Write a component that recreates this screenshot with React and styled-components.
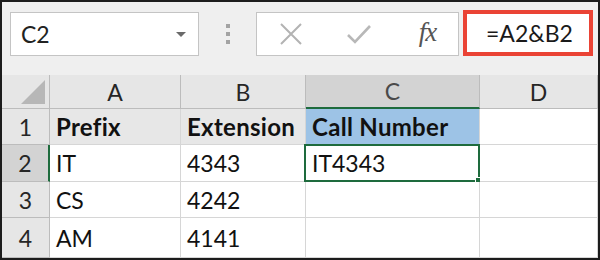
import React from "react";
import styled, { createGlobalStyle } from "styled-components";

const Global = createGlobalStyle`
  html, body { margin: 0; padding: 0; background: #fff; }
  body { font-family: Lato, "Open Sans", sans-serif; }
`;

const Frame = styled.div`
  width: 600px;
  height: 260px;
  box-sizing: border-box;
  border: 2px solid #1c1c1c;
  background: #efefef;
  display: flex;
  flex-direction: column;
  overflow: hidden;
`;

const Toolbar = styled.div`
  height: 73px;
  flex: none;
  display: flex;
  align-items: flex-start;
  padding: 8px 4px 0 8px;
  box-sizing: border-box;
`;

const NameBox = styled.div`
  width: 189px;
  height: 44px;
  margin-top: 2px;
  box-sizing: border-box;
  background: #fff;
  border: 1px solid #c4c4c4;
  display: flex;
  align-items: center;
  justify-content: space-between;
  padding: 0 12px 0 10px;
  font-size: 23px;
  color: #222;
`;

const Caret = styled.span`
  width: 0;
  height: 0;
  border-left: 5px solid transparent;
  border-right: 5px solid transparent;
  border-top: 5px solid #6a6a6a;
`;

const Grip = styled.div`
  width: 57px;
  height: 48px;
  display: flex;
  flex-direction: column;
  align-items: center;
  justify-content: center;
  gap: 4px;
  span {
    width: 4px;
    height: 4px;
    background: #a3a3a3;
  }
`;

const ButtonBox = styled.div`
  width: 203px;
  height: 44px;
  margin-top: 2px;
  box-sizing: border-box;
  background: #fff;
  border: 1px solid #c4c4c4;
  display: grid;
  grid-template-columns: 68px 68px 1fr;
  align-items: center;
  justify-items: center;
`;

const Fx = styled.span`
  font-family: "Liberation Serif", serif;
  font-style: italic;
  font-size: 27px;
  color: #555;
  letter-spacing: -1px;
  padding-left: 4px;
  margin-top: -4px;
`;

const FormulaBox = styled.div`
  margin-left: 4px;
  width: 130px;
  height: 46px;
  box-sizing: border-box;
  background: #fff;
  border: 4px solid #ea4335;
  display: flex;
  align-items: center;
  padding-left: 19px;
  font-size: 23px;
  color: #1a1a1a;
`;

const Sheet = styled.div`
  flex: 1;
  display: grid;
  grid-template-columns: 48px 131px 125px 174px 1fr;
  grid-template-rows: 34px 36px 37px 36px 1fr;
  background: #fff;
`;

const ColHead = styled.div`
  background: ${(p) => (p.$active ? "#d3d3d3" : "#e6e6e6")};
  border-right: 1px solid #bcbcbc;
  border-bottom: ${(p) => (p.$active ? "2px solid #1e6b3d" : "1px solid #bcbcbc")};
  display: flex;
  align-items: center;
  justify-content: center;
  font-size: 23px;
  color: ${(p) => (p.$active ? "#4a4a4a" : "#262626")};
  box-sizing: border-box;
`;

const Corner = styled.div`
  background: #e6e6e6;
  border-right: 1px solid #bcbcbc;
  border-bottom: 1px solid #bcbcbc;
  display: flex;
  align-items: flex-end;
  justify-content: flex-end;
  padding: 0 4px 4px 0;
  box-sizing: border-box;
  span {
    width: 0;
    height: 0;
    border-left: 24px solid transparent;
    border-bottom: 24px solid #b7b7b7;
  }
`;

const RowHead = styled.div`
  background: ${(p) => (p.$active ? "#d3d3d3" : "#e6e6e6")};
  border-right: ${(p) => (p.$active ? "2px solid #1e6b3d" : "1px solid #bcbcbc")};
  border-bottom: 1px solid #bcbcbc;
  display: flex;
  align-items: center;
  justify-content: center;
  font-size: 23px;
  color: #262626;
  box-sizing: border-box;
`;

const Cell = styled.div`
  position: relative;
  background: ${(p) => p.$fill || "#fff"};
  border-right: 1px solid #d6d6d6;
  border-bottom: 1px solid #d6d6d6;
  display: flex;
  align-items: center;
  padding-left: 6px;
  font-size: ${(p) => (p.$bold ? "24px" : "23px")};
  font-weight: ${(p) => (p.$bold ? 700 : 400)};
  letter-spacing: ${(p) => (p.$bold ? "0.3px" : "0")};
  color: #111;
  box-sizing: border-box;
`;

const Selection = styled.div`
  position: absolute;
  left: -2px;
  top: -1px;
  right: -1px;
  bottom: -1px;
  border: 2px solid #1e6b3d;
  pointer-events: none;
`;

const Handle = styled.div`
  position: absolute;
  right: -6px;
  bottom: -6px;
  width: 7px;
  height: 7px;
  background: #1e6b3d;
  border: 1px solid #fff;
`;

const Cross = () => (
  <svg width="24" height="24" viewBox="0 0 24 24">
    <path d="M2 2 L22 22 M22 2 L2 22" stroke="#b3b3b3" strokeWidth="2" fill="none" />
  </svg>
);

const Check = () => (
  <svg width="26" height="22" viewBox="0 0 26 22">
    <path d="M2 12 L9 19 L24 3" stroke="#b8b8b8" strokeWidth="2.6" fill="none" />
  </svg>
);

const rows = [
  { n: 1, cells: [{ t: "Prefix", b: true, f: "#e7e7e7" }, { t: "Extension", b: true, f: "#e7e7e7" }, { t: "Call Number", b: true, f: "#9dc3e6" }, { t: "" }] },
  { n: 2, active: true, cells: [{ t: "IT" }, { t: "4343" }, { t: "IT4343", sel: true }, { t: "" }] },
  { n: 3, cells: [{ t: "CS" }, { t: "4242" }, { t: "" }, { t: "" }] },
  { n: 4, cells: [{ t: "AM" }, { t: "4141" }, { t: "" }, { t: "" }] },
];

export default function App() {
  return (
    <>
      <Global />
      <Frame>
        <Toolbar>
          <NameBox>
            C2
            <Caret />
          </NameBox>
          <Grip>
            <span />
            <span />
            <span />
          </Grip>
          <ButtonBox>
            <Cross />
            <Check />
            <Fx>fx</Fx>
          </ButtonBox>
          <FormulaBox>=A2&amp;B2</FormulaBox>
        </Toolbar>
        <Sheet>
          <Corner>
            <span />
          </Corner>
          {["A", "B", "C", "D"].map((c) => (
            <ColHead key={c} $active={c === "C"}>
              {c}
            </ColHead>
          ))}
          {rows.map((r) => (
            <React.Fragment key={r.n}>
              <RowHead $active={r.active}>{r.n}</RowHead>
              {r.cells.map((c, i) => (
                <Cell key={i} $bold={c.b} $fill={c.f}>
                  {c.t}
                  {c.sel && (
                    <Selection>
                      <Handle />
                    </Selection>
                  )}
                </Cell>
              ))}
            </React.Fragment>
          ))}
        </Sheet>
      </Frame>
    </>
  );
}
